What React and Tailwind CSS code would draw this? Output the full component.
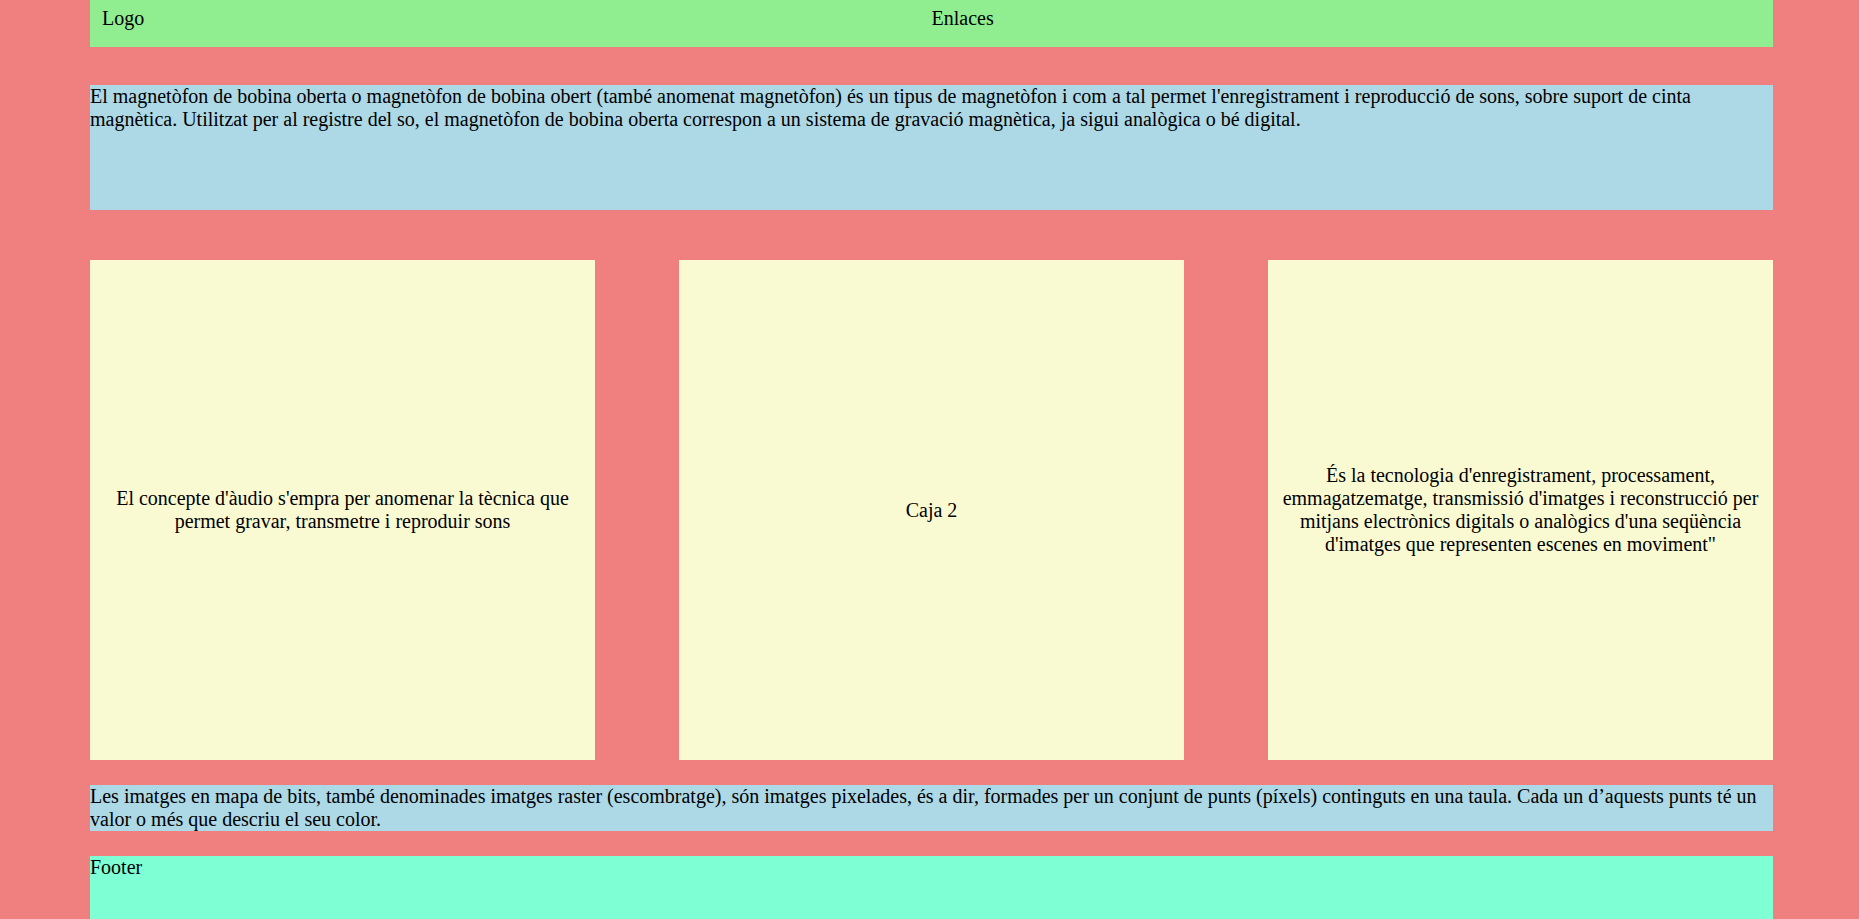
export default function App() {
  return (
    <div
      className="min-h-screen w-full bg-[#F08080] text-black text-[20px] leading-[23px]"
      style={{ fontFamily: '"Liberation Serif", "Times New Roman", serif' }}
    >
      <div className="ml-[90px] w-[1683px] pb-[20px]">
        <header className="grid grid-cols-2 h-[47px] bg-[#90EE90] px-[12px] pt-[7px]">
          <div>Logo</div>
          <div>Enlaces</div>
        </header>
        <section className="mt-[38px] h-[125px] bg-[#ADD8E6]">
          El magnetòfon de bobina oberta o magnetòfon de bobina obert (també anomenat magnetòfon) és un tipus de magnetòfon i com a tal permet l'enregistrament i reproducció de sons, sobre suport de cinta magnètica. Utilitzat per al registre del so, el magnetòfon de bobina oberta correspon a un sistema de gravació magnètica, ja sigui analògica o bé digital.
        </section>
        <div className="mt-[50px] flex justify-between">
          <div className="w-[505px] h-[500px] bg-[#FAFAD2] flex items-center justify-center text-center px-[10px]">
            El concepte d'àudio s'empra per anomenar la tècnica que permet gravar, transmetre i reproduir sons
          </div>
          <div className="w-[505px] h-[500px] bg-[#FAFAD2] flex items-center justify-center text-center px-[10px]">
            Caja 2
          </div>
          <div className="w-[505px] h-[500px] bg-[#FAFAD2] flex items-center justify-center text-center px-[10px]">
            És la tecnologia d'enregistrament, processament, emmagatzematge, transmissió d'imatges i reconstrucció per mitjans electrònics digitals o analògics d'una seqüència d'imatges que representen escenes en moviment"
          </div>
        </div>
        <section className="mt-[25px] bg-[#ADD8E6]">
          Les imatges en mapa de bits, també denominades imatges raster (escombratge), són imatges pixelades, és a dir, formades per un conjunt de punts (píxels) continguts en una taula. Cada un d’aquests punts té un valor o més que descriu el seu color.
        </section>
        <footer className="mt-[25px] h-[100px] bg-[#7FFFD4]">Footer</footer>
      </div>
    </div>
  );
}
